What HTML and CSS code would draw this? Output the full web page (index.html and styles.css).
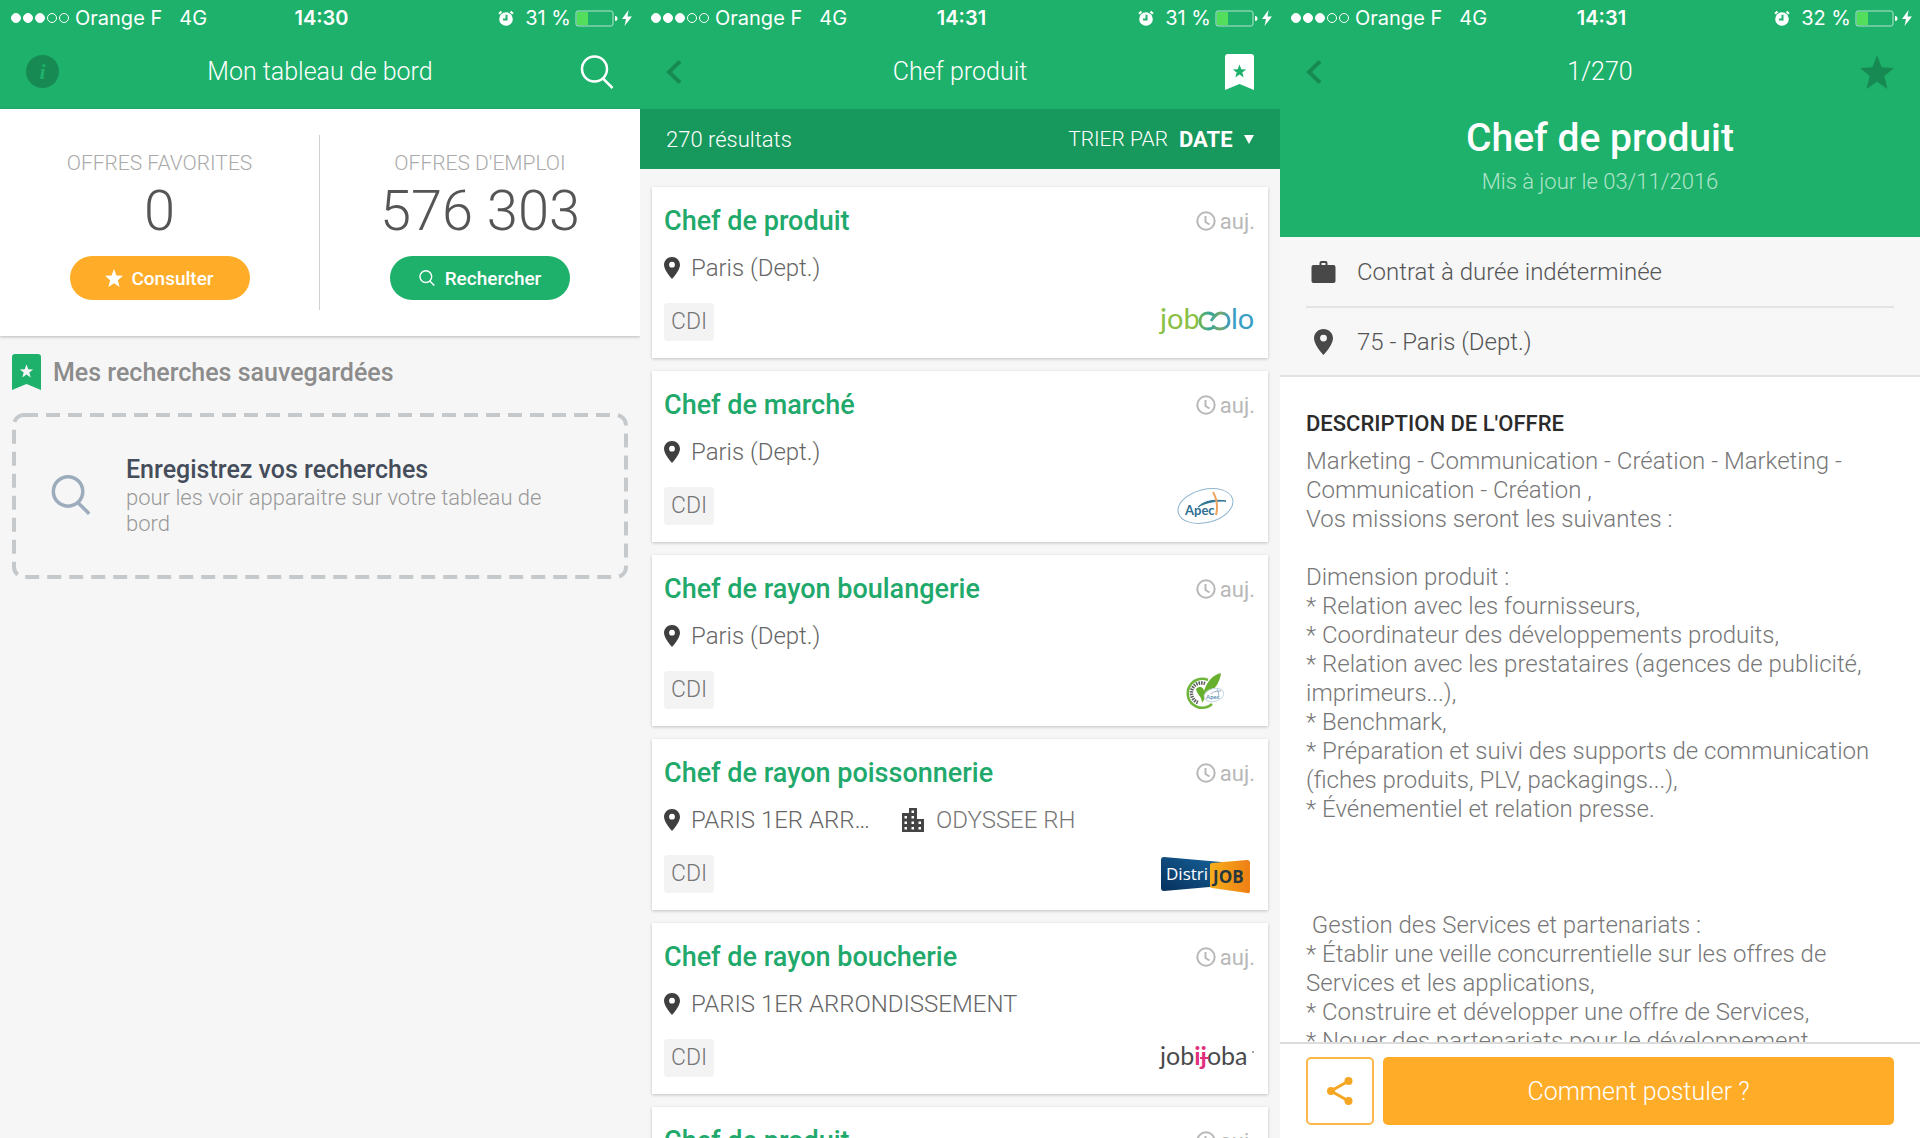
FILE: index.html
```html
<!DOCTYPE html>
<html lang="fr">
<head>
    <meta charset="UTF-8">
    <meta name="viewport" content="width=device-width, initial-scale=1.0">
    <title>Offres d'emploi</title>
    <link rel="stylesheet" href="styles.css">
</head>
<body>
    <!-- Icônes partagées -->
    <svg class="sprite" aria-hidden="true">
        <symbol id="search" viewBox="0 0 34 34"><circle cx="14.500" cy="14" r="12.500"/><path d="M23 23.500 L32.500 33"/></symbol>
        <symbol id="pin" viewBox="0 0 16 22"><path fill-rule="evenodd" d="M8 0C3.600 0 0 3.400 0 7.800 0 13.500 8 22 8 22s8-8.500 8-14.200C16 3.400 12.400 0 8 0zm0 10.600a2.900 2.900 0 1 1 0-5.800 2.900 2.900 0 0 1 0 5.800z"/></symbol>
        <symbol id="clock" viewBox="0 0 20 20"><circle cx="10" cy="10" r="8.700"/><path d="M9.500 5v6l4 2.500"/></symbol>
        <symbol id="star" viewBox="0 0 34 34"><path d="M17 0l4.600 12.200L34 12.900l-9.700 8.200L27.500 34 17 26.700 6.500 34l3.200-12.900L0 12.900l12.400-.7z"/></symbol>
        <symbol id="bookmark" viewBox="0 0 29 36"><path fill-rule="evenodd" d="M3 0h23a3 3 0 0 1 3 3v33l-14.500-6L0 36V3a3 3 0 0 1 3-3zm11.500 10.500l-1.800 4.700-4.900.2 3.900 3.100-1.400 4.900 4.200-2.800 4.200 2.800-1.400-4.900 3.900-3.100-4.900-.2z"/></symbol>
        <symbol id="back" viewBox="0 0 16 24"><path d="M14 1.500L3 12l11 10.500"/></symbol>
        <symbol id="alarm" viewBox="0 0 16 17"><circle cx="8" cy="9" r="6.800"/><path class="line" d="M1 3.700L3.500 1.400M15 3.700L12.500 1.400"/><path class="hand" d="M8.500 4.800V9.500H5"/></symbol>
        <symbol id="battery" viewBox="0 0 43 17"><rect class="frame" x="1" y="1" width="37" height="15" rx="2"/><rect class="level" x="2" y="2" width="11" height="13" rx="1"/><path class="nub" d="M40 6a2.500 2.500 0 0 1 0 5z"/></symbol>
        <symbol id="bolt" viewBox="0 0 10 16"><path d="M6.500 0L0 9h4L2.500 16 10 6.500H5.500z"/></symbol>
    </svg>

    <main class="screens">
        <!-- Tableau de bord -->
        <section class="screen">
            <header class="top">
                <div class="status">
                    <div class="status-left">
                        <span class="dots"><i class="full"></i><i class="full"></i><i class="full"></i><i></i><i></i></span>
                        <span>Orange F</span>
                        <span class="network">4G</span>
                    </div>
                    <span class="time">14:30</span>
                    <div class="status-right">
                        <svg class="alarm"><use href="#alarm"/></svg>
                        <span>31 %</span>
                        <svg class="battery"><use href="#battery"/></svg>
                        <svg class="bolt"><use href="#bolt"/></svg>
                    </div>
                </div>
                <nav class="nav">
                    <button class="nav-btn info" aria-label="Informations">i</button>
                    <h1>Mon tableau de bord</h1>
                    <button class="nav-btn end" aria-label="Rechercher"><svg class="icon-search"><use href="#search"/></svg></button>
                </nav>
            </header>
            <div class="stats">
                <div class="stat">
                    <span class="stat-label">OFFRES FAVORITES</span>
                    <span class="stat-value">0</span>
                    <button class="pill orange"><svg class="pill-star"><use href="#star"/></svg>Consulter</button>
                </div>
                <div class="stat">
                    <span class="stat-label">OFFRES D'EMPLOI</span>
                    <span class="stat-value">576 303</span>
                    <button class="pill green"><svg class="pill-search"><use href="#search"/></svg>Rechercher</button>
                </div>
            </div>
            <div class="saved">
                <h2><svg class="icon-bookmark"><use href="#bookmark"/></svg>Mes recherches sauvegardées</h2>
                <div class="empty">
                    <svg class="empty-border" aria-hidden="true"><rect x="2" y="2" rx="10"/></svg>
                    <svg class="empty-icon"><use href="#search"/></svg>
                    <div>
                        <h3>Enregistrez vos recherches</h3>
                        <p>pour les voir apparaitre sur votre tableau de bord</p>
                    </div>
                </div>
            </div>
        </section>

        <!-- Liste des résultats -->
        <section class="screen">
            <header class="top">
                <div class="status">
                    <div class="status-left">
                        <span class="dots"><i class="full"></i><i class="full"></i><i class="full"></i><i></i><i></i></span>
                        <span>Orange F</span>
                        <span class="network">4G</span>
                    </div>
                    <span class="time">14:31</span>
                    <div class="status-right">
                        <svg class="alarm"><use href="#alarm"/></svg>
                        <span>31 %</span>
                        <svg class="battery"><use href="#battery"/></svg>
                        <svg class="bolt"><use href="#bolt"/></svg>
                    </div>
                </div>
                <nav class="nav">
                    <button class="nav-btn" aria-label="Retour"><svg class="icon-back"><use href="#back"/></svg></button>
                    <h1>Chef produit</h1>
                    <button class="nav-btn end" aria-label="Sauvegarder la recherche"><svg class="icon-bookmark"><use href="#bookmark"/></svg></button>
                </nav>
            </header>
            <div class="sort-bar">
                <span>270 résultats</span>
                <div class="sort">
                    <label for="tri">TRIER PAR</label>
                    <select id="tri"><option>DATE</option></select>
                    <svg class="caret" viewBox="0 0 10 9"><path d="M0 0h10L5 9z"/></svg>
                </div>
            </div>
            <div class="jobs">
                <article class="job">
                    <div class="job-head"><h2>Chef de produit</h2><span class="when"><svg><use href="#clock"/></svg>auj.</span></div>
                    <div class="job-place"><svg class="icon-pin"><use href="#pin"/></svg><span>Paris (Dept.)</span></div>
                    <div class="job-foot">
                        <span class="tag">CDI</span>
                        <svg class="logo" viewBox="0 0 98 38">
                            <defs><linearGradient id="loop"><stop offset="0" stop-color="#6fb558"/><stop offset=".35" stop-color="#35a49b"/><stop offset=".7" stop-color="#7aa86a"/><stop offset="1" stop-color="#3a9cc4"/></linearGradient></defs>
                            <text class="jobcolo" x="3" y="26" fill="#8abf45">job</text>
                            <path d="M58 23c-2 2-4 3-7 3-5 0-8-3-8-8s3-8 8-8c4 0 6 2 8 4M55 23c3 2 5 3 8 3 5 0 9-3 9-8s-3-8-8-8c-5 0-7 4-10 8" fill="none" stroke="url(#loop)" stroke-width="2.800"/>
                            <text class="jobcolo" x="74" y="26" fill="#3a9fc4">lo</text>
                        </svg>
                    </div>
                </article>
                <article class="job">
                    <div class="job-head"><h2>Chef de marché</h2><span class="when"><svg><use href="#clock"/></svg>auj.</span></div>
                    <div class="job-place"><svg class="icon-pin"><use href="#pin"/></svg><span>Paris (Dept.)</span></div>
                    <div class="job-foot">
                        <span class="tag">CDI</span>
                        <svg class="logo" viewBox="0 0 98 38">
                            <ellipse cx="48.500" cy="19" rx="28" ry="16.500" transform="rotate(-14 48.500 19)" fill="#fff" stroke="#8fb4cf"/>
                            <path d="M41 20c6-6 15-8 28-6-11 0-19 1-28 6z" fill="#2f7793" stroke="#2f7793"/>
                            <path d="M56 5c4 7 5 15 3 23" fill="none" stroke="#eda35f" stroke-width="2"/>
                            <text class="apec" x="28" y="28" fill="#2f6f93">Apec</text>
                        </svg>
                    </div>
                </article>
                <article class="job">
                    <div class="job-head"><h2>Chef de rayon boulangerie</h2><span class="when"><svg><use href="#clock"/></svg>auj.</span></div>
                    <div class="job-place"><svg class="icon-pin"><use href="#pin"/></svg><span>Paris (Dept.)</span></div>
                    <div class="job-foot">
                        <span class="tag">CDI</span>
                        <svg class="logo" viewBox="0 0 98 38">
                            <path d="M51 9a14.500 14.500 0 1 0 4 24" fill="none" stroke="#6fb53c" stroke-width="2.500"/>
                            <path d="M48 12.500a10 10 0 1 0-7 19" fill="none" stroke="#59605c" stroke-width="3.500" stroke-dasharray="1.500 1"/>
                            <path d="M39 18c4-4 8-1 8 2 3-9 8-16 17-18-1 9-6 16-10 18-5 3-6 8-9 12 0-7-5-8-6-14z" fill="#67b02e"/>
                            <ellipse cx="57" cy="24" rx="10" ry="6.500" transform="rotate(-14 57 24)" fill="#fff" stroke="#c9d8e4"/>
                            <path d="M54 23c3-3 7-3 10-3M60 18c2 3 2 6 1 9" fill="none" stroke="#9bb2c4"/>
                            <text class="apec-small" x="49" y="28" fill="#5b93b5">Apec</text>
                        </svg>
                    </div>
                </article>
                <article class="job">
                    <div class="job-head"><h2>Chef de rayon poissonnerie</h2><span class="when"><svg><use href="#clock"/></svg>auj.</span></div>
                    <div class="job-place">
                        <svg class="icon-pin"><use href="#pin"/></svg><span class="short">PARIS 1ER ARRONDISSEMENT</span>
                        <svg class="icon-company" viewBox="0 0 22 24"><path fill-rule="evenodd" d="M0 5h7V0h8v11h7v13H0zM2.500 8v2.500H5V8zm0 5.500V16H5v-2.500zm0 5.500v2.500H5V19zM9.500 2.500V5h2.500V2.500zm0 5.500v2.500h2.500V8zm0 5.500V16h2.500v-2.500zm0 5.500v2.500h2.500V19zm7-5.500V16H19v-2.500zm0 5.500v2.500H19V19z"/></svg>
                        <span class="company">ODYSSEE RH</span>
                    </div>
                    <div class="job-foot">
                        <span class="tag">CDI</span>
                        <svg class="logo" viewBox="0 0 98 38">
                            <defs>
                                <linearGradient id="dblue" x1="0" y1="1" x2="1" y2="0"><stop offset="0" stop-color="#06315c"/><stop offset="1" stop-color="#17639c"/></linearGradient>
                                <linearGradient id="dorange"><stop offset="0" stop-color="#f6ae1c"/><stop offset="1" stop-color="#ef7f15"/></linearGradient>
                            </defs>
                            <path d="M7 2l57 5q2 0 2 2v20q0 2-2 2L7 36q-3 0-3-3V5q0-3 3-3z" fill="url(#dblue)"/>
                            <path d="M55 8l35-3q3 0 3 3v28q0 3-3 2l-35-5q-2 0-2-2V10q0-2 2-2z" fill="url(#dorange)"/>
                            <text class="distri" x="9" y="25" fill="#fff">Distri</text>
                            <text class="distri-job" x="56" y="28" fill="#26383f">JOB</text>
                        </svg>
                    </div>
                </article>
                <article class="job">
                    <div class="job-head"><h2>Chef de rayon boucherie</h2><span class="when"><svg><use href="#clock"/></svg>auj.</span></div>
                    <div class="job-place"><svg class="icon-pin"><use href="#pin"/></svg><span>PARIS 1ER ARRONDISSEMENT</span></div>
                    <div class="job-foot">
                        <span class="tag">CDI</span>
                        <svg class="logo" viewBox="0 0 98 38">
                            <text class="jobijoba" x="3" y="26" fill="#4a4a4d">job<tspan fill="#e0307e" font-weight="700">ij</tspan>oba</text>
                            <path d="M43 19h9" stroke="#e0307e" stroke-width="2"/>
                            <circle cx="96" cy="13" r="1" fill="#888"/>
                        </svg>
                    </div>
                </article>
                <article class="job">
                    <div class="job-head"><h2>Chef de produit</h2><span class="when"><svg><use href="#clock"/></svg>auj.</span></div>
                </article>
            </div>
        </section>

        <!-- Détail d'une offre -->
        <section class="screen detail">
            <header class="top">
                <div class="status">
                    <div class="status-left">
                        <span class="dots"><i class="full"></i><i class="full"></i><i class="full"></i><i></i><i></i></span>
                        <span>Orange F</span>
                        <span class="network">4G</span>
                    </div>
                    <span class="time">14:31</span>
                    <div class="status-right">
                        <svg class="alarm"><use href="#alarm"/></svg>
                        <span>32 %</span>
                        <svg class="battery"><use href="#battery"/></svg>
                        <svg class="bolt"><use href="#bolt"/></svg>
                    </div>
                </div>
                <nav class="nav">
                    <button class="nav-btn" aria-label="Retour"><svg class="icon-back"><use href="#back"/></svg></button>
                    <span class="nav-title">1/270</span>
                    <button class="nav-btn end" aria-label="Ajouter aux favoris"><svg class="icon-star"><use href="#star"/></svg></button>
                </nav>
                <div class="offer-head">
                    <h1>Chef de produit</h1>
                    <p>Mis à jour le 03/11/2016</p>
                </div>
            </header>
            <ul class="facts">
                <li><svg class="fact-icon" viewBox="0 0 24 26"><path fill-rule="evenodd" d="M2 6h6V4q0-2 2-2h4q2 0 2 2v2h6q2 0 2 2v14q0 2-2 2H2q-2 0-2-2V8q0-2 2-2zm8 0h4V4h-4z"/></svg>Contrat à durée indéterminée</li>
                <li><svg class="fact-icon"><use href="#pin"/></svg>75 - Paris (Dept.)</li>
            </ul>
            <div class="description">
                <h2>DESCRIPTION DE L'OFFRE</h2>
                <p>Marketing - Communication - Création - Marketing - Communication - Création ,
Vos missions seront les suivantes :

Dimension produit :
* Relation avec les fournisseurs,
* Coordinateur des développements produits,
* Relation avec les prestataires (agences de publicité, imprimeurs...),
* Benchmark,
* Préparation et suivi des supports de communication (fiches produits, PLV, packagings...),
* Événementiel et relation presse.



 Gestion des Services et partenariats :
* Établir une veille concurrentielle sur les offres de Services et les applications,
* Construire et développer une offre de Services,
* Nouer des partenariats pour le développement</p>
            </div>
            <footer class="actions">
                <button class="share" aria-label="Partager"><svg viewBox="0 0 26 28"><path d="M21.500 4L4 14l17.500 10"/><circle cx="21.500" cy="4" r="4"/><circle cx="4" cy="14" r="4"/><circle cx="21.500" cy="24" r="4"/></svg></button>
                <button class="apply">Comment postuler ?</button>
            </footer>
        </section>
    </main>
</body>
</html>
```

FILE: styles.css
```css
* {
    box-sizing: border-box;
}
body {
    margin: 0;
    font-family: Roboto, "Liberation Sans", sans-serif;
    font-weight: 300;
    font-size: 24px;
    background-color: #f6f6f6;
    color: #555;
}
h1, h2, h3, p, ul {
    margin: 0;
    padding: 0;
}
button {
    font-family: inherit;
    border: none;
    padding: 0;
    background: none;
    cursor: pointer;
}
svg {
    flex-shrink: 0;
    fill: currentColor;
}
.sprite {
    position: absolute;
    width: 0;
    height: 0;
}
.screens {
    display: grid;
    grid-template-columns: repeat(3, minmax(0, 1fr));
    height: 100vh;
    overflow: hidden;
}
.screen {
    display: flex;
    flex-direction: column;
    min-height: 0;
    overflow: hidden;
}
#search, #back, #clock {
    fill: none;
    stroke: currentColor;
}

/* En-tête */
.top {
    flex-shrink: 0;
    background-color: #1db16b;
    color: #fff;
}
.status {
    display: grid;
    grid-template-columns: 1fr auto 1fr;
    align-items: center;
    height: 36px;
    padding: 0 8px 0 11px;
    font-family: Inter, sans-serif;
    font-size: 20px;
    font-weight: 400;
}
.status-left,
.status-right {
    display: flex;
    align-items: center;
}
.status-right {
    justify-content: flex-end;
}
.dots {
    display: flex;
    gap: 2px;
    margin-right: 6px;
}
.dots i {
    width: 10px;
    height: 10px;
    border: 1px solid #fff;
    border-radius: 50%;
}
.dots .full {
    background-color: #fff;
}
.network {
    margin-left: 17px;
}
.time {
    font-weight: 600;
}
.alarm {
    width: 16px;
    height: 17px;
    margin-right: 11px;
}
#alarm .line {
    stroke: #fff;
    stroke-width: 2;
}
#alarm .hand {
    fill: none;
    stroke: #1db16b;
    stroke-width: 2;
}
.battery {
    width: 43px;
    height: 17px;
    margin: 0 4px;
}
#battery .frame {
    fill: none;
    stroke: #b5e5cc;
}
#battery .level {
    fill: #53de5b;
}
.bolt {
    width: 10px;
    height: 16px;
}
.nav {
    display: grid;
    grid-template-columns: 1fr auto 1fr;
    align-items: center;
    height: 73px;
    padding: 0 26px 2px;
}
.nav h1,
.nav-title {
    font-size: 25px;
    font-weight: 300;
}
.nav-btn {
    display: flex;
    justify-self: start;
    color: #178a53;
}
.nav-btn.end {
    justify-self: end;
    color: #fff;
}
.info {
    justify-content: center;
    align-items: center;
    width: 33px;
    height: 33px;
    border-radius: 50%;
    background-color: #178a53;
    color: #1db16b;
    font: italic 700 22px "Liberation Serif", serif;
}
.icon-search {
    width: 34px;
    height: 34px;
    stroke-width: 2.5;
}
.icon-back {
    width: 16px;
    height: 24px;
    stroke-width: 4;
}
.icon-bookmark {
    width: 29px;
    height: 36px;
}
.icon-star {
    width: 34px;
    height: 34px;
    color: #178a53;
}

/* Tableau de bord */
.stats {
    display: grid;
    grid-template-columns: 1fr 1fr;
    padding: 26px 0;
    background-color: #fff;
    box-shadow: 0 1px 3px rgba(0, 0, 0, 0.25);
}
.stat {
    display: flex;
    flex-direction: column;
    align-items: center;
    height: 175px;
    padding-top: 14px;
}
.stat:first-child {
    border-right: 1px solid #d0d0d0;
}
.stat-label {
    font-size: 21px;
    line-height: 28px;
    color: #aaa;
}
.stat-value {
    font-size: 56px;
    line-height: 68px;
    margin-bottom: 11px;
    color: #555;
}
.pill {
    display: flex;
    justify-content: center;
    align-items: center;
    width: 180px;
    height: 44px;
    border-radius: 22px;
    color: #fff;
    font-size: 19px;
    font-weight: 500;
}
.orange {
    background-color: #ffad29;
}
.green {
    background-color: #1db16b;
}
.pill-star {
    width: 18px;
    height: 18px;
    margin-right: 8px;
}
.pill-search {
    width: 16px;
    height: 16px;
    margin-right: 10px;
    stroke-width: 3;
}
.saved {
    padding: 18px 12px;
}
.saved h2 {
    display: flex;
    align-items: center;
    gap: 12px;
    height: 36px;
    margin-bottom: 23px;
    font-size: 25px;
    font-weight: 500;
    color: #8c8c8c;
}
.saved h2 svg {
    color: #1db16b;
}
.empty {
    position: relative;
    display: flex;
    align-items: center;
    gap: 35px;
    height: 166px;
    padding: 0 60px 2px 39px;
}
.empty-border {
    position: absolute;
    inset: 0;
    width: 100%;
    height: 100%;
}
.empty-border rect {
    width: calc(100% - 4px);
    height: calc(100% - 4px);
    fill: none;
    stroke: #c6c9cb;
    stroke-width: 4;
    stroke-dasharray: 14 8;
}
.empty-icon {
    width: 40px;
    height: 40px;
    color: #9dacbd;
    stroke-width: 3;
}
.empty h3 {
    font-size: 25px;
    line-height: 31px;
    font-weight: 500;
    color: #454d5b;
}
.empty p {
    font-size: 22px;
    line-height: 26px;
    color: #999;
}

/* Résultats */
.sort-bar {
    flex-shrink: 0;
    display: flex;
    justify-content: space-between;
    align-items: center;
    height: 60px;
    padding: 0 26px;
    background-color: #17985c;
    color: #fff;
    font-size: 22px;
}
.sort {
    display: flex;
    align-items: center;
    gap: 11px;
}
.sort label {
    font-size: 21px;
}
.sort select {
    appearance: none;
    border: none;
    padding: 0;
    background: none;
    color: #fff;
    font-family: inherit;
    font-size: 22px;
    font-weight: 700;
}
.caret {
    width: 10px;
    height: 9px;
}
.jobs {
    display: flex;
    flex-direction: column;
    gap: 13px;
    min-height: 0;
    padding: 18px 12px;
    overflow: hidden;
}
.job {
    flex-shrink: 0;
    height: 171px;
    padding: 17px 13px 0 12px;
    background-color: #fff;
    box-shadow: 0 1px 3px rgba(0, 0, 0, 0.22);
}
.job-head,
.job-foot {
    display: flex;
    justify-content: space-between;
    align-items: center;
}
.job-head {
    height: 34px;
}
.job h2 {
    font-size: 27px;
    font-weight: 500;
    color: #21a96c;
}
.when {
    display: flex;
    align-items: center;
    gap: 4px;
    font-size: 22px;
    font-weight: 400;
    color: #b8b8b8;
}
.when svg {
    width: 20px;
    height: 20px;
    stroke-width: 2;
}
.job-place {
    display: flex;
    align-items: center;
    height: 30px;
    margin: 15px 0 20px;
    color: #666;
}
.icon-pin {
    width: 16px;
    height: 22px;
    margin-right: 11px;
    color: #3f3f3f;
}
.short {
    width: 192px;
    overflow: hidden;
    text-overflow: ellipsis;
    white-space: nowrap;
}
.icon-company {
    width: 22px;
    height: 24px;
    margin: 0 12px 0 19px;
    color: #444;
}
.company {
    color: #777;
}
.tag {
    padding: 0 7px;
    border-radius: 4px;
    background-color: #f3f3f3;
    color: #777;
    font-size: 23px;
    line-height: 38px;
}
.logo {
    width: 98px;
    height: 38px;
    overflow: visible;
}
.jobcolo {
    font: 400 29px Lato, sans-serif;
}
.apec {
    font: 700 13px Lato, sans-serif;
}
.apec-small {
    font: 700 6px Lato, sans-serif;
}
.distri {
    font: 400 17px "Open Sans", sans-serif;
}
.distri-job {
    font: 700 17px "Open Sans", sans-serif;
}
.jobijoba {
    font: 400 25px Lato, sans-serif;
}

/* Détail */
.detail {
    background-color: #fff;
}
.offer-head {
    height: 128px;
    text-align: center;
}
.offer-head h1 {
    padding-top: 6px;
    font-size: 39px;
    line-height: 46px;
    font-weight: 500;
}
.offer-head p {
    padding-top: 7px;
    font-size: 22px;
    line-height: 28px;
    color: #b0e4ca;
}
.facts {
    flex-shrink: 0;
    padding: 0 26px;
    list-style: none;
    background-color: #f7f7f7;
    border-bottom: 2px solid #e2e2e2;
}
.facts li {
    display: flex;
    align-items: center;
    gap: 21px;
    height: 69px;
    padding-left: 5px;
}
.facts li + li {
    border-top: 2px solid #e4e4e4;
}
.fact-icon {
    width: 25px;
    height: 26px;
    color: #484848;
}
.description {
    flex: 1;
    min-height: 0;
    padding: 32px 26px 0;
    overflow: hidden;
    line-height: 29px;
    color: #777;
}
.description h2 {
    margin-bottom: 9px;
    font-size: 22px;
    font-weight: 500;
    color: #2b2b2b;
}
.description p {
    white-space: pre-wrap;
}
.actions {
    flex-shrink: 0;
    display: flex;
    gap: 9px;
    padding: 13px 26px;
    border-top: 2px solid #dcdcdc;
    background-color: #fff;
}
.share {
    display: flex;
    justify-content: center;
    align-items: center;
    width: 68px;
    height: 68px;
    border: 2px solid #fcb84a;
    border-radius: 5px;
    color: #f5a623;
}
.share svg {
    width: 26px;
    height: 28px;
}
.share path {
    fill: none;
    stroke: currentColor;
    stroke-width: 3;
}
.apply {
    flex: 1;
    border-radius: 5px;
    background-color: #ffad29;
    color: #fff;
    font-size: 25px;
    font-weight: 300;
}
```
